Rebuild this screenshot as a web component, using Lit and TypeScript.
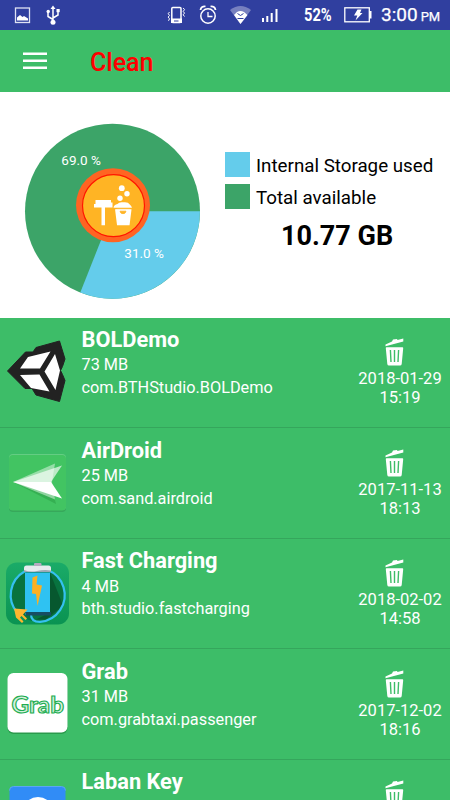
import { LitElement, html, css, svg, TemplateResult } from "lit";
import { customElement, property } from "lit/decorators.js";

interface AppItem {
  name: string;
  size: string;
  pkg: string;
  date: string;
  time: string;
  icon: TemplateResult;
}

const unityIcon = html`<svg width="74" height="96" viewBox="0 -13.500 74 96">
  <path d="M7.500 39.500 25.500 20.500h7.500l3-4.500L59.500 9.500l5.500 18-2.500 7.500-2 4 2 4 2.500 6L59.500 70 36 63.500 32 57h-7Z" fill="#222" stroke="#222" stroke-width="1" stroke-linejoin="round"/>
  <path d="M20 37 28 25.500 50.500 20 40 37Z M20 43.500 39.500 43 49.500 60 31 56.500Z M44.500 40 55 22.500 60 39 55.500 58.500Z" fill="#fff"/>
</svg>`;

const airIcon = html`<svg width="74" height="96" viewBox="0 -9 74 96">
  <rect x="9" y="19" width="57" height="56" rx="4" fill="#37a85b"/>
  <rect x="9" y="17" width="57" height="56" rx="4" fill="#64cd83"/>
  <rect x="9" y="18" width="57" height="55.500" rx="4" fill="#42c462"/>
  <path d="M13 45 56 67 54 59Z" fill="#35b052"/>
  <path d="M13 45 55 26.500 52 45 55 62.500Z" fill="#fff" opacity=".45"/>
  <path d="M13 45 62 28.500 51 45Z" fill="#fff" opacity=".65"/>
  <path d="M13 45H51L62 61.500Z" fill="#fff"/>
</svg>`;

const chargeIcon = html`<svg width="74" height="96" viewBox="0 -8.400 74 96">
  <defs><linearGradient id="g" x1="0" y1="0" x2="0" y2="1"><stop stop-color="#1aab68"/><stop offset="1" stop-color="#0a9352"/></linearGradient></defs>
  <rect x="6" y="15" width="63" height="62" rx="11" fill="url(#g)"/>
  <circle cx="37.500" cy="47.500" r="26.500" fill="#08733f"/>
  <path d="M50 25 63 58 46 72 36 72 50 65Z" fill="#07582f"/>
  <path d="M17.500 65.500A27 27 0 1 1 40 74.500Q31 74.500 31 67" fill="none" stroke="#35c0f0" stroke-width="2.200"/>
  <path d="M25 25H50V67H25Z" fill="#2fc2f2"/>
  <path d="M25 64.500h26v3.500h-25Z" fill="#174d63"/>
  <path d="M24 20.500q0-2.500 2.500-2.500h22q2.500 0 2.500 2.500v4h-27Z" fill="#e6ebee"/>
  <path d="M24 22.500q6 2.500 13 1t14-.5v1.500h-27Z" fill="#9aa8b4"/>
  <rect x="34" y="15.500" width="7.500" height="3" rx="1" fill="#b7aac2"/>
  <path d="M32.500 30 37.500 28 36.500 37 42 38 37.500 58.500 36 46.500 32 46Z" fill="#fdb022"/>
  <path d="M14 61 27.500 62 23 67 27 71 25.500 72.500 21.500 68.500 20 70 23.500 74 22 75.500 16 70Z" fill="#ffb62f"/>
</svg>`;

const grabIcon = html`<svg width="74" height="96" viewBox="0 -8.500 74 96">
  <rect x="7.500" y="17" width="60" height="59.500" rx="6" fill="#2a9a4c"/>
  <rect x="7.500" y="15.500" width="60" height="59.500" rx="6" fill="#fff"/>
  <text x="11.500" y="55.200" textLength="52.500" lengthAdjust="spacingAndGlyphs" font-family="Lato, sans-serif" font-weight="700" font-size="22.500" fill="#d5f0de" stroke="#21ad50" stroke-width="1.100">Grab</text>
</svg>`;

const labanIcon = html`<svg width="74" height="96" viewBox="0 -8.500 74 96">
  <rect x="9.500" y="18" width="56" height="56" rx="4" fill="#318cf6"/>
  <path d="M9.500 22q0-4 4-4h48q4 0 4 4" fill="none" stroke="#5ba6f2"/>
  <circle cx="38" cy="44" r="15.500" fill="#fff"/>
</svg>`;

const apps: AppItem[] = [
  { name: "BOLDemo", size: "73 MB", pkg: "com.BTHStudio.BOLDemo", date: "2018-01-29", time: "15:19", icon: unityIcon },
  { name: "AirDroid", size: "25 MB", pkg: "com.sand.airdroid", date: "2017-11-13", time: "18:13", icon: airIcon },
  { name: "Fast Charging", size: "4 MB", pkg: "bth.studio.fastcharging", date: "2018-02-02", time: "14:58", icon: chargeIcon },
  { name: "Grab", size: "31 MB", pkg: "com.grabtaxi.passenger", date: "2017-12-02", time: "18:16", icon: grabIcon },
  { name: "Laban Key", size: "", pkg: "", date: "", time: "", icon: labanIcon },
];

@customElement("status-bar")
export class StatusBar extends LitElement {
  static styles = css`
    :host { display: flex; align-items: center; height: 30px; background: #303f9f; color: #fff; }
    svg { display: block; flex: none; }
    .grow { flex: 1; }
    .pct { font: 700 17.500px/31px Roboto, sans-serif; width: 28px; margin-left: 26px; white-space: nowrap; }
    .pct span { display: inline-block; transform: scaleX(.84); transform-origin: 0 50%; }
    .bat { margin-left: 12px; }
    .clock { font: 400 19px/33px Roboto, sans-serif; margin-left: 9px; width: 69px; white-space: nowrap; -webkit-text-stroke: .25px #fff; }
    .pm { font-size: 13px; margin-left: 3px; }
  `;
  render() {
    return html`
      <svg width="75" height="30" viewBox="0 0 75 30">
        <rect x="15.500" y="8" width="14" height="14.500" fill="none" stroke="#dfe2f3" stroke-width="1.300"/>
        <path d="M17 20.500v-3l3-2.500 2.500 2 1.500-1 4 2.500v2Z" fill="#fff"/>
        <g stroke="#fff" stroke-width="1.500" fill="none"><path d="M53 8v14M53 19.500 48 16.500V12M53 18l5-3V11"/></g>
        <path d="M50.500 9 53 5.500 55.500 9Z" fill="#fff"/><circle cx="53" cy="22.200" r="2.500" fill="#fff"/><circle cx="48.200" cy="11.500" r="1.700" fill="#fff"/><rect x="56.500" y="9" width="3.200" height="3.200" fill="#fff"/>
      </svg>
      <div class="grow"></div>
      <svg width="112" height="30" viewBox="166 0 112 30">
        <rect x="171.800" y="7.500" width="9.200" height="15" rx="1" fill="none" stroke="#fff" stroke-width="1.500"/>
        <path d="M171 18.500h11V23h-11Z" fill="#fff"/><path d="M174 21h4.500" stroke="#303f9f" stroke-width="1"/>
        <path d="M169.500 12l-1.300 1.700 1.300 1.700-1.300 1.700 1.300 1.700-1 2M183.200 8l1.300 1.700-1.300 1.700 1.300 1.700-1.300 1.700 1.300 1.700" fill="none" stroke="#fff"/>
        <circle cx="208" cy="16" r="7.200" fill="none" stroke="#fff" stroke-width="1.500"/><path d="M208 12v4.500h4.500" fill="none" stroke="#fff" stroke-width="1.300"/>
        <path d="M200.500 10a4 4 0 0 1 5-3.500M215.500 10a4 4 0 0 0-5-3.500" stroke="#fff" stroke-width="1.800" fill="none"/>
        <path d="M230 10q10.500-8 21 0L240.500 24Z" fill="#7780bf"/><path d="M234 15l3-3q3.500-2 7 0l3.500 3-7 9Z" fill="#fff"/><path d="M237.500 13.500l3 2 3-2M237.500 18.500h6" stroke="#303f9f" stroke-width="1" fill="none"/>
        <path d="M263 18v4M267.300 16v6M271.700 13v9M276.500 9v13" stroke="#fff" stroke-width="2"/>
      </svg>
      <div class="pct"><span>52%</span></div>
      <svg class="bat" width="28" height="30" viewBox="0 0 28 30">
        <rect x=".8" y="7.800" width="24.500" height="14" fill="none" stroke="#fff" stroke-width="1.300"/>
        <rect x="25" y="11" width="2.500" height="7.500" fill="#fff"/>
        <path d="M13.500 9.500h4L16 13h2.500l-7 7.500 1.800-5H10Z" fill="#fff"/>
      </svg>
      <div class="clock">3:00<span class="pm">PM</span></div>
    `;
  }
}

@customElement("storage-card")
export class StorageCard extends LitElement {
  static styles = css`
    :host { display: flex; height: 225.500px; background: #fff; font-family: Roboto, sans-serif; color: #000; }
    .pie { flex: none; display: block; }
    .legend { padding: 60px 0 0; display: flex; flex-direction: column; gap: 6.500px; }
    .item { display: flex; align-items: center; gap: 6px; height: 25.500px; font-size: 18.750px; white-space: nowrap; }
    .item span { padding-top: 2px; }
    .swatch { width: 25px; height: 25px; }
    .used { background: #64cceb; }
    .free { background: #3ca468; }
    .total { font-size: 27px; font-weight: 700; line-height: 30px; margin-left: 56px; margin-top: 5px; white-space: nowrap; }
    .label { font: 400 13.500px Roboto, sans-serif; fill: #fff; }
  `;
  render() {
    const a = 0.31 * 2 * Math.PI;
    const cx = 112.5, cy = 119.2, r = 87.5;
    return html`
      <svg class="pie" width="225" height="225" viewBox="0 0 225 225">
        <circle cx=${cx} cy=${cy} r=${r} fill="#3ca468"/>
        ${svg`<path d="M${cx} ${cy}H${cx + r}A${r} ${r} 0 0 1 ${cx + r * Math.cos(a)} ${cy + r * Math.sin(a)}Z" fill="#64cceb"/>`}
        <g transform="translate(0 .7)">
          <circle cx="113" cy="112.500" r="37" fill="#ff6422"/>
          <circle cx="113.500" cy="113" r="31" fill="#ffb424" stroke="#ff1500" stroke-width="1.200"/>
          <g fill="#fff">
            <path d="M95.500 107.300h15.500v2.500h1.500v5h-7.500v17.700h-3.500v-17.700h-7.500v-3.500h1.500Z"/>
            <path d="M115 116.500l2.500-.5h11.500l2.500.5-2 16h-12.500Z"/>
            <path d="M113.500 115q.5-3 4-3.700 1.500-2 4.500-1.800h3q3.500 0 4.500 2 2 1.500 2.500 3.500Z"/>
            <circle cx="121.800" cy="95.500" r="2.900"/><circle cx="127" cy="101" r="2.700"/><circle cx="120" cy="105.500" r="2.700"/>
          </g>
          <path d="M114.500 116h17M120 118.500q.5 2.500 3 2.500t3-2.500Z" fill="#ffb424" stroke="#ffb424" stroke-width=".8"/>
        </g>
        <text class="label" x="61.300" y="72.700" textLength="39.500">69.0 %</text>
        <text class="label" x="124.300" y="165.700" textLength="39.500">31.0 %</text>
      </svg>
      <div class="legend">
        <div class="item"><div class="swatch used"></div><span>Internal Storage used</span></div>
        <div class="item"><div class="swatch free"></div><span>Total available</span></div>
        <div class="total">10.77 GB</div>
      </div>
    `;
  }
}

@customElement("app-row")
export class AppRow extends LitElement {
  @property({ attribute: false }) app!: AppItem;
  static styles = css`
    :host { display: grid; grid-template-columns: 81.500px 1fr 100px; height: 110.630px; box-sizing: border-box; border-bottom: 1px solid #35a65c; font-family: Roboto, sans-serif; color: #fff; }
    svg { display: block; }
    .info { padding-top: 8.400px; white-space: nowrap; }
    .name { font-weight: 700; font-size: 21.800px; line-height: 28.500px; }
    .sub { font-size: 16.300px; line-height: 22.500px; }
    .when { display: flex; flex-direction: column; align-items: center; padding-top: 20.400px; font-size: 16.500px; line-height: 19px; }
    .trash { margin: 0 0 3px -12px; }
  `;
  render() {
    const a = this.app;
    return html`
      <div class="icon">${a.icon}</div>
      <div class="info">
        <div class="name">${a.name}</div>
        <div class="sub">${a.size}</div>
        <div class="sub">${a.pkg}</div>
      </div>
      <div class="when">
        <svg class="trash" width="19" height="28" viewBox="0 0 19 28">
          <path d="M.5 6.500 7 3.500 8 1.500 12 1 12.500 2 18.300.500V3.500L.5 8.300Z" fill="#fff"/>
          <path d="M1.500 9.300h16q.8 0 .7 1l-1.500 15.700q-.2 1.600-1.700 1.600H4q-1.500 0-1.700-1.600L.8 10.300q-.1-1 .7-1Z" fill="#fff"/>
          <path d="M5.400 12l.6 12M9.500 12v12M13.600 12l-.6 12" stroke="#3dbd68" stroke-width="1.400"/>
        </svg>
        <div>${a.date}</div>
        <div>${a.time}</div>
      </div>
    `;
  }
}

@customElement("app-root")
export class AppRoot extends LitElement {
  static styles = css`
    :host { display: flex; flex-direction: column; height: 800px; width: 450px; overflow: hidden; background: #3dbd68; }
    .bar { flex: none; height: 62px; display: flex; align-items: center; font: 500 25px/30px Roboto, sans-serif; color: #f00; }
    .menu { margin: 0 43px 0 23px; display: block; }
    .title { padding-top: 3px; }
    status-bar, storage-card, app-row { flex: none; }
  `;
  render() {
    return html`
      <status-bar></status-bar>
      <div class="bar">
        <svg class="menu" width="24" height="18" viewBox="0 0 24 18"><path d="M0 1.700h24M0 8.700h24M0 15.700h24" stroke="#fff" stroke-width="2.400"/></svg>
        <div class="title">Clean</div>
      </div>
      <storage-card></storage-card>
      ${apps.map((a) => html`<app-row .app=${a}></app-row>`)}
    `;
  }
}
